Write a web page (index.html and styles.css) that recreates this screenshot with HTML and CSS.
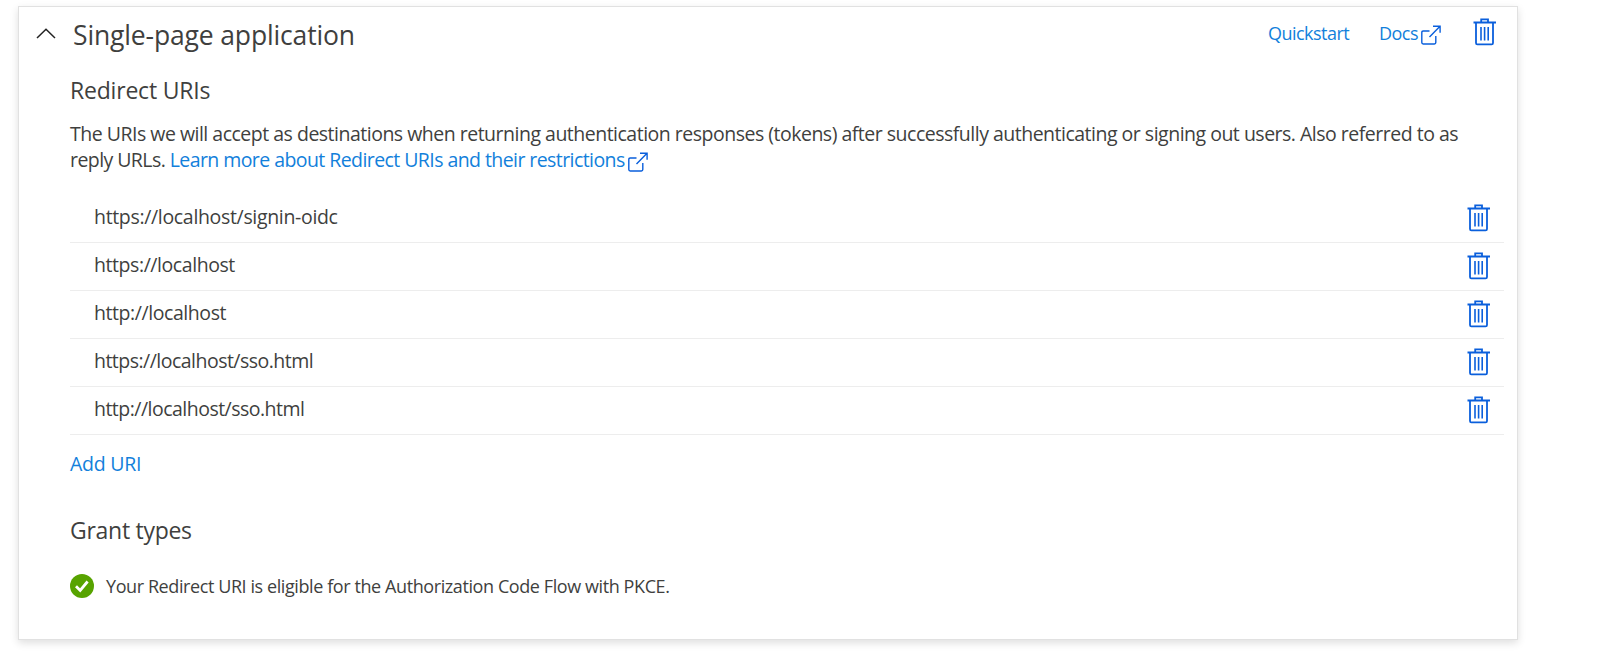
FILE: index.html
```
<!DOCTYPE html>
<html lang="en">
<head>
<meta charset="utf-8">
<title>Single-page application</title>
<link rel="stylesheet" href="styles.css">
</head>
<body>
<main class="card">
  <header class="head">
    <svg class="chevron" viewBox="0 0 20 11"><path d="M1 10 10 1.200 19 10" fill="none" stroke="#222" stroke-width="1.500"/></svg>
    <h1 class="title">Single-page application</h1>
    <nav class="links">
      <a class="link small quick">Quickstart</a>
      <a class="link small docs"><span>Docs</span><svg class="ext"><use href="#external"/></svg></a>
      <svg class="trash"><use href="#trash"/></svg>
    </nav>
  </header>
  <section class="content">
    <h2 class="subtitle redirect">Redirect URIs</h2>
    <p class="desc"><span class="line one">The URIs we will accept as destinations when returning authentication responses (tokens) after successfully authenticating or signing out users. Also referred to as</span> <span class="line two">reply URLs. <a class="link">Learn more about Redirect URIs and their restrictions</a><svg class="ext"><use href="#external"/></svg></span></p>
    <ul class="uris">
      <li class="row"><span class="wide">https://localhost/signin-oidc</span><svg class="trash"><use href="#trash"/></svg></li>
      <li class="row"><span>https://localhost</span><svg class="trash"><use href="#trash"/></svg></li>
      <li class="row"><span>http://localhost</span><svg class="trash"><use href="#trash"/></svg></li>
      <li class="row"><span class="tight">https://localhost/sso.html</span><svg class="trash"><use href="#trash"/></svg></li>
      <li class="row"><span class="tight">http://localhost/sso.html</span><svg class="trash"><use href="#trash"/></svg></li>
    </ul>
    <a class="link add">Add URI</a>
    <h2 class="subtitle grant">Grant types</h2>
    <div class="status">
      <svg class="check" viewBox="0 0 24 24"><circle cx="12" cy="12" r="12" fill="#57a300"/><path d="m6 12.300 4.200 4.200L17.600 7.500" fill="none" stroke="#fff" stroke-width="2.800"/></svg>
      <span>Your Redirect URI is eligible for the Authorization Code Flow with PKCE.</span>
    </div>
  </section>
</main>
<svg class="defs" width="0" height="0" aria-hidden="true">
  <symbol id="trash" viewBox="0 0 24 28">
    <path d="M.5 4.500h22.500M3 4.500v20.500q0 1.400 1.400 1.400h14.200q1.400 0 1.400-1.400V4.500M8.200 4.500V1.300h6.800v3.200" fill="none" stroke="currentColor" stroke-width="1.800"/>
    <path d="M8 9v13.500M11.600 9v13.500M15.200 9v13.500" fill="none" stroke="currentColor" stroke-width="1.600"/>
  </symbol>
  <symbol id="external" viewBox="0 0 20 20">
    <path d="M8.500 6H2.200Q.8 6 .8 7.400v10.200q0 1.400 1.400 1.400h11.200q1.400 0 1.400-1.400V11M8.500 12 19 1.200M12 1.200h7.100v6.600" fill="none" stroke="currentColor" stroke-width="1.400"/>
  </symbol>
</svg>
</body>
</html>
```
FILE: styles.css
```
* { box-sizing: border-box; margin: 0; padding: 0; }
body { min-height: 658px; padding: 6px 0 0 18px; background: #fff; color: #403f3e; font-family: "Segoe UI", "Open Sans", "Noto Sans", sans-serif; font-size: 19.5px; }
.defs { display: block; height: 0; }
.card { width: 1500px; height: 634px; border: 1px solid #e1e1e1; background: #fff; box-shadow: 0 3px 8px rgba(0,0,0,.13); }
.head { display: flex; height: 55px; padding: 0 20px 0 17px; }
.chevron { width: 20px; height: 11px; margin-top: 21px; }
.title { margin-left: 17px; font-weight: 400; font-size: 26.500px; line-height: 56px; letter-spacing: -.15px; white-space: nowrap; }
.links { display: flex; margin-left: auto; }
.link { color: #1280db; }
.small { font-size: 18px; line-height: 53px; letter-spacing: -.53px; }
.quick { width: 111px; }
.docs { display: flex; width: 94px; }
.docs .ext { margin: 18px 0 0 3px; }
.ext { width: 20px; height: 20px; color: #0a5fdc; margin-left: 3px; }
.trash { width: 24px; height: 28px; color: #0a5fdc; flex: none; }
.links .trash { margin-top: 11px; }
.content { padding: 0 13px 0 51px; }
.subtitle { font-weight: 400; font-size: 23px; line-height: 32px; letter-spacing: -.2px; }
.redirect { margin-top: 12px; }
.desc { margin-top: 15px; line-height: 26px; }
.line { display: block; white-space: nowrap; letter-spacing: -.5px; }
.two { display: flex; white-space: pre; letter-spacing: -.57px; }
.two .ext { margin-top: 5px; }
.uris { list-style: none; margin-top: 22px; }
.row { display: flex; justify-content: space-between; align-items: flex-start; height: 48px; border-bottom: 1px solid #ededed; padding: 9px 13px 0 24px; line-height: 25px; letter-spacing: -.43px; }
.wide { letter-spacing: -.33px; }
.tight { letter-spacing: -.52px; }
.add { display: block; margin-top: 15px; line-height: 28px; letter-spacing: -.25px; }
.grant { margin-top: 36px; letter-spacing: -.28px; }
.status { display: flex; align-items: center; gap: 12px; margin-top: 26px; height: 28px; font-size: 18px; letter-spacing: -.41px; }
.check { width: 24px; height: 24px; }
```
